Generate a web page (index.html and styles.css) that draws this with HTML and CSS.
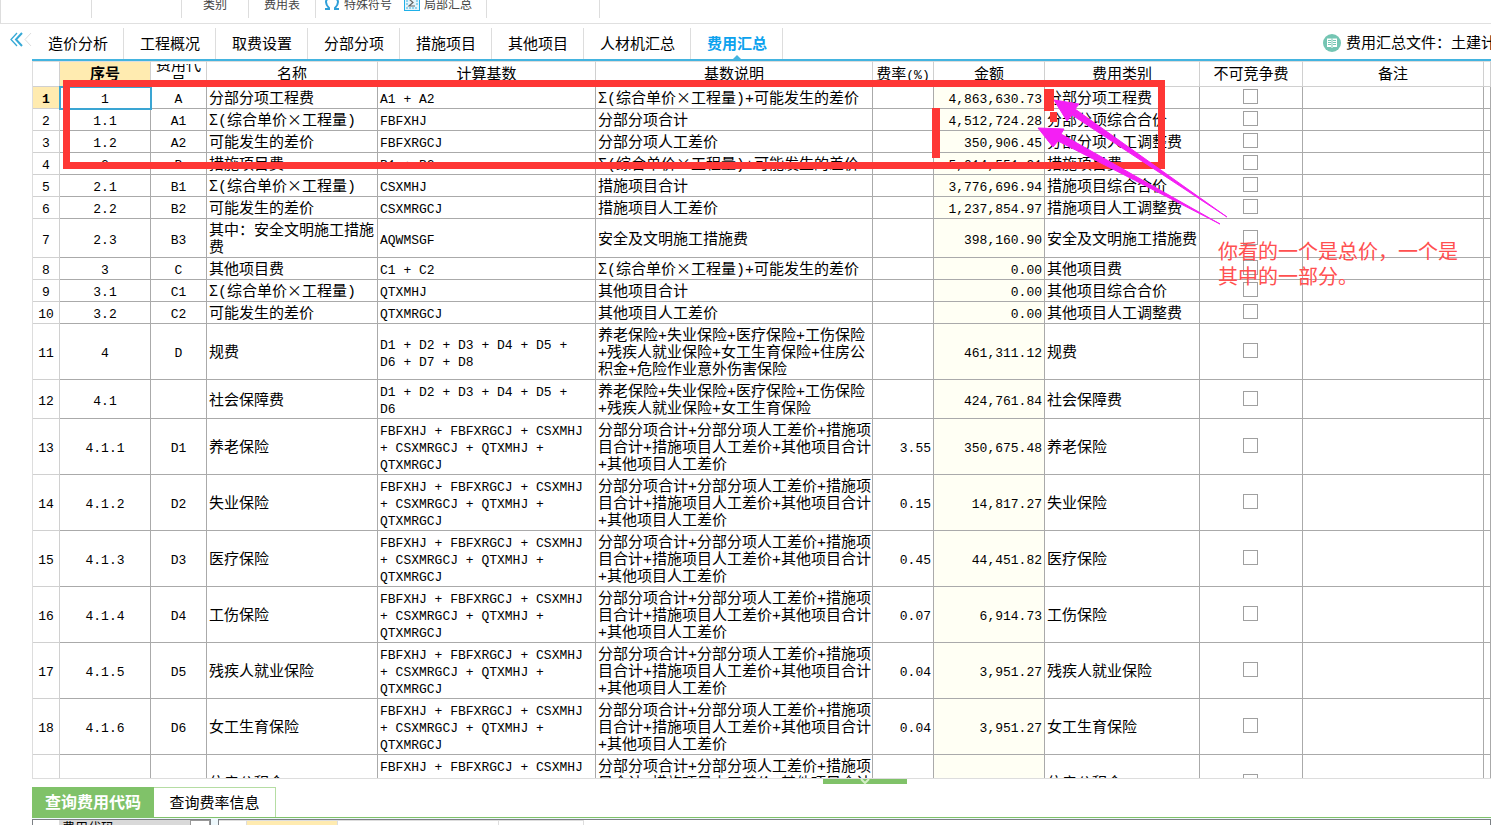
FILE: index.html
```html
<!DOCTYPE html>
<html lang="zh-CN">
<head>
<meta charset="utf-8">
<title>费用汇总</title>
<link rel="stylesheet" href="styles.css">
</head>
<body>
<div class="app">
  <header class="ribbon">
    <div class="group group-a"></div>
    <div class="group group-b"></div>
    <button class="group group-c">类别</button>
    <button class="group group-d">费用表</button>
    <div class="group group-e">
      <button class="tool"><svg width="16" height="14" viewBox="0 0 16 14"><path d="M1 9H5V8C3 6 2 4 2 2C2 0 4 -3 8 -3C12 -3 14 0 14 2C14 4 13 6 11 8V9H15" fill="none" stroke="#2f9fd8" stroke-width="2"/></svg>特殊符号</button>
      <button class="tool"><svg width="16" height="14" viewBox="0 0 16 14"><rect x=".5" y="-5" width="15" height="15.500" fill="#e4f4fb" stroke="#1fb0e8"/><path d="M2 1H4M12 1H14M2 4H4M12 4H14M2 8H14" stroke="#8fd3ee" stroke-width="2" stroke-dasharray="2 1"/><path d="M11 -1H5L9 2.500L5 6H11" fill="none" stroke="#666" stroke-width="1.200"/></svg>局部汇总</button>
    </div>
    <div class="group group-f"></div>
  </header>
  <div class="body">
    <aside class="rail">
      <button class="collapse" aria-label="收起"><svg width="22" height="16" viewBox="0 0 22 16"><path d="M7 1L1 7.500L7 14" fill="none" stroke="#36a9d6" stroke-width="1.300"/><path d="M12 1L6 7.500L12 14" fill="none" stroke="#36a9d6" stroke-width="2"/><path d="M21 1L15 7.500L21 14" fill="none" stroke="#ddd"/></svg></button>
    </aside>
    <main class="main">
      <nav class="tabs">
        <button class="tab">造价分析</button>
        <button class="tab">工程概况</button>
        <button class="tab">取费设置</button>
        <button class="tab">分部分项</button>
        <button class="tab">措施项目</button>
        <button class="tab">其他项目</button>
        <button class="tab">人材机汇总</button>
        <button class="tab active">费用汇总</button>
        <div class="file">
          <svg width="18" height="18" viewBox="0 0 18 18"><circle cx="9" cy="9" r="9" fill="#74c5b3"/><path d="M4 4.500H8.300L9 5L9.700 4.500H14V13H10L9 14L8 13H4Z" fill="#fff"/><path d="M5 6.500H8M5 8.500H8M5 10.500H8M10 6.500H13M10 8.500H13M10 10.500H13M9 5V13" stroke="#74c5b3"/></svg>
          <span>费用汇总文件：土建计价</span>
        </div>
      </nav>
      <section class="grid">
        <table class="sheet">
          <colgroup><col class="w-no"><col class="w-seq"><col class="w-code"><col class="w-name"><col class="w-base"><col class="w-desc"><col class="w-rate"><col class="w-sum"><col class="w-type"><col class="w-check"><col class="w-note"><col></colgroup>
          <thead>
            <tr><th></th><th class="hot">序号</th><th><div class="two">费用代<br>号</div></th><th>名称</th><th>计算基数</th><th>基数说明</th><th>费率<span class="m">(%)</span></th><th>金额</th><th>费用类别</th><th>不可竞争费</th><th>备注</th><th></th></tr>
          </thead>
          <tbody>
            <tr><th class="hot">1</th><td class="picked">1</td><td>A</td><td>分部分项工程费</td><td>A1 + A2</td><td><i>Σ</i>(综合单价<i>×</i>工程量)+可能发生的差价</td><td></td><td>4,863,630.73</td><td>分部分项工程费</td><td><input type="checkbox" aria-label="不可竞争费 1"></td><td></td><td></td></tr>
            <tr><th>2</th><td>1.1</td><td>A1</td><td><i>Σ</i>(综合单价<i>×</i>工程量)</td><td>FBFXHJ</td><td>分部分项合计</td><td></td><td>4,512,724.28</td><td>分部分项综合合价</td><td><input type="checkbox" aria-label="不可竞争费 2"></td><td></td><td></td></tr>
            <tr><th>3</th><td>1.2</td><td>A2</td><td>可能发生的差价</td><td>FBFXRGCJ</td><td>分部分项人工差价</td><td></td><td>350,906.45</td><td>分部分项人工调整费</td><td><input type="checkbox" aria-label="不可竞争费 3"></td><td></td><td></td></tr>
            <tr><th>4</th><td>2</td><td>B</td><td>措施项目费</td><td>B1 + B2</td><td><i>Σ</i>(综合单价<i>×</i>工程量)+可能发生的差价</td><td></td><td>5,014,551.91</td><td>措施项目费</td><td><input type="checkbox" aria-label="不可竞争费 4"></td><td></td><td></td></tr>
            <tr><th>5</th><td>2.1</td><td>B1</td><td><i>Σ</i>(综合单价<i>×</i>工程量)</td><td>CSXMHJ</td><td>措施项目合计</td><td></td><td>3,776,696.94</td><td>措施项目综合合价</td><td><input type="checkbox" aria-label="不可竞争费 5"></td><td></td><td></td></tr>
            <tr><th>6</th><td>2.2</td><td>B2</td><td>可能发生的差价</td><td>CSXMRGCJ</td><td>措施项目人工差价</td><td></td><td>1,237,854.97</td><td>措施项目人工调整费</td><td><input type="checkbox" aria-label="不可竞争费 6"></td><td></td><td></td></tr>
            <tr><th>7</th><td>2.3</td><td>B3</td><td>其中：安全文明施工措施<br>费</td><td>AQWMSGF</td><td>安全及文明施工措施费</td><td></td><td>398,160.90</td><td>安全及文明施工措施费</td><td><input type="checkbox" aria-label="不可竞争费 7"></td><td></td><td></td></tr>
            <tr><th>8</th><td>3</td><td>C</td><td>其他项目费</td><td>C1 + C2</td><td><i>Σ</i>(综合单价<i>×</i>工程量)+可能发生的差价</td><td></td><td>0.00</td><td>其他项目费</td><td><input type="checkbox" aria-label="不可竞争费 8"></td><td></td><td></td></tr>
            <tr><th>9</th><td>3.1</td><td>C1</td><td><i>Σ</i>(综合单价<i>×</i>工程量)</td><td>QTXMHJ</td><td>其他项目合计</td><td></td><td>0.00</td><td>其他项目综合合价</td><td><input type="checkbox" aria-label="不可竞争费 9"></td><td></td><td></td></tr>
            <tr><th>10</th><td>3.2</td><td>C2</td><td>可能发生的差价</td><td>QTXMRGCJ</td><td>其他项目人工差价</td><td></td><td>0.00</td><td>其他项目人工调整费</td><td><input type="checkbox" aria-label="不可竞争费 10"></td><td></td><td></td></tr>
            <tr><th>11</th><td>4</td><td>D</td><td>规费</td><td>D1 + D2 + D3 + D4 + D5 +<br>D6 + D7 + D8</td><td>养老保险+失业保险+医疗保险+工伤保险<br>+残疾人就业保险+女工生育保险+住房公<br>积金+危险作业意外伤害保险</td><td></td><td>461,311.12</td><td>规费</td><td><input type="checkbox" aria-label="不可竞争费 11"></td><td></td><td></td></tr>
            <tr><th>12</th><td>4.1</td><td></td><td>社会保障费</td><td>D1 + D2 + D3 + D4 + D5 +<br>D6</td><td>养老保险+失业保险+医疗保险+工伤保险<br>+残疾人就业保险+女工生育保险</td><td></td><td>424,761.84</td><td>社会保障费</td><td><input type="checkbox" aria-label="不可竞争费 12"></td><td></td><td></td></tr>
            <tr><th>13</th><td>4.1.1</td><td>D1</td><td>养老保险</td><td>FBFXHJ + FBFXRGCJ + CSXMHJ<br>+ CSXMRGCJ + QTXMHJ +<br>QTXMRGCJ</td><td>分部分项合计+分部分项人工差价+措施项<br>目合计+措施项目人工差价+其他项目合计<br>+其他项目人工差价</td><td>3.55</td><td>350,675.48</td><td>养老保险</td><td><input type="checkbox" aria-label="不可竞争费 13"></td><td></td><td></td></tr>
            <tr><th>14</th><td>4.1.2</td><td>D2</td><td>失业保险</td><td>FBFXHJ + FBFXRGCJ + CSXMHJ<br>+ CSXMRGCJ + QTXMHJ +<br>QTXMRGCJ</td><td>分部分项合计+分部分项人工差价+措施项<br>目合计+措施项目人工差价+其他项目合计<br>+其他项目人工差价</td><td>0.15</td><td>14,817.27</td><td>失业保险</td><td><input type="checkbox" aria-label="不可竞争费 14"></td><td></td><td></td></tr>
            <tr><th>15</th><td>4.1.3</td><td>D3</td><td>医疗保险</td><td>FBFXHJ + FBFXRGCJ + CSXMHJ<br>+ CSXMRGCJ + QTXMHJ +<br>QTXMRGCJ</td><td>分部分项合计+分部分项人工差价+措施项<br>目合计+措施项目人工差价+其他项目合计<br>+其他项目人工差价</td><td>0.45</td><td>44,451.82</td><td>医疗保险</td><td><input type="checkbox" aria-label="不可竞争费 15"></td><td></td><td></td></tr>
            <tr><th>16</th><td>4.1.4</td><td>D4</td><td>工伤保险</td><td>FBFXHJ + FBFXRGCJ + CSXMHJ<br>+ CSXMRGCJ + QTXMHJ +<br>QTXMRGCJ</td><td>分部分项合计+分部分项人工差价+措施项<br>目合计+措施项目人工差价+其他项目合计<br>+其他项目人工差价</td><td>0.07</td><td>6,914.73</td><td>工伤保险</td><td><input type="checkbox" aria-label="不可竞争费 16"></td><td></td><td></td></tr>
            <tr><th>17</th><td>4.1.5</td><td>D5</td><td>残疾人就业保险</td><td>FBFXHJ + FBFXRGCJ + CSXMHJ<br>+ CSXMRGCJ + QTXMHJ +<br>QTXMRGCJ</td><td>分部分项合计+分部分项人工差价+措施项<br>目合计+措施项目人工差价+其他项目合计<br>+其他项目人工差价</td><td>0.04</td><td>3,951.27</td><td>残疾人就业保险</td><td><input type="checkbox" aria-label="不可竞争费 17"></td><td></td><td></td></tr>
            <tr><th>18</th><td>4.1.6</td><td>D6</td><td>女工生育保险</td><td>FBFXHJ + FBFXRGCJ + CSXMHJ<br>+ CSXMRGCJ + QTXMHJ +<br>QTXMRGCJ</td><td>分部分项合计+分部分项人工差价+措施项<br>目合计+措施项目人工差价+其他项目合计<br>+其他项目人工差价</td><td>0.04</td><td>3,951.27</td><td>女工生育保险</td><td><input type="checkbox" aria-label="不可竞争费 18"></td><td></td><td></td></tr>
            <tr><th></th><td></td><td></td><td>住房公积金</td><td>FBFXHJ + FBFXRGCJ + CSXMHJ<br>+ CSXMRGCJ + QTXMHJ +<br>QTXMRGCJ</td><td>分部分项合计+分部分项人工差价+措施项<br>目合计+措施项目人工差价+其他项目合计<br>+其他项目人工差价</td><td></td><td></td><td>住房公积金</td><td><input type="checkbox" aria-label="不可竞争费 19"></td><td></td><td></td></tr>
          </tbody>
        </table>
      </section>
      <div class="splitter"><button class="handle" aria-label="收起下方面板"><svg width="10" height="6" viewBox="0 0 10 6"><path d="M1 0L5 4L9 0" fill="none" stroke="#d5efc9" stroke-width="2"/></svg></button></div>
      <nav class="lower-tabs">
        <button class="lower active">查询费用代码</button>
        <button class="lower">查询费率信息</button>
      </nav>
      <section class="panels">
        <div class="tree"><span class="tree-mark">⌄⌄</span><span class="tree-head">费用代码</span><span class="tree-end"></span></div>
        <div class="list"><span class="list-a"></span><span class="list-b"></span><span class="list-c"></span><span class="list-d"></span></div>
      </section>
    </main>
  </div>
  <svg class="marks" width="1240" height="240" viewBox="0 0 1240 240">
    <rect x="66.500" y="83.500" width="1095" height="82" fill="none" stroke="#fe3735" stroke-width="7"/>
    <path d="M932 108h8v50h-8zM1044 89h10v22h-10zM1050 112h7v10h-7z" fill="#fe3735"/>
    <path d="M1054 100L1079 104L1075 109L1227 217L1072 115L1067 121ZM1038 128L1064 129L1061 134L1220 224L1058 141L1053 147Z" fill="#f41ff4" stroke="#f41ff4"/>
  </svg>
  <p class="remark">你看的一个是总价，一个是<br>其中的一部分。</p>
</div>
</body>
</html>
```
FILE: styles.css
```css
* { box-sizing: border-box; }
body {
  margin: 0;
  overflow: hidden;
  background: #fff;
  color: #000;
  font: 15px/17px "Liberation Mono", "Noto Sans CJK SC", monospace;
}
button {
  margin: 0;
  padding: 0;
  border: 0;
  background: none;
  color: inherit;
  font: inherit;
  white-space: nowrap;
}
svg { display: block; flex: none; }
.app { position: relative; display: flex; flex-direction: column; height: 100vh; overflow: hidden; }

.ribbon { display: flex; flex: none; height: 24px; padding-bottom: 5px; border-bottom: 1px solid #e0e0e0; overflow: hidden; border-left: 1px solid #ddd; }
.group {
  display: flex;
  align-items: flex-start;
  justify-content: center;
  height: 18px;
  border-right: 1px solid #ddd;
  color: #444;
  font-size: 12px;
  line-height: 13px;
}
.group-a { width: 91px; }
.group-b { width: 90px; }
.group-c { width: 67px; }
.group-d { width: 67px; }
.group-e { width: 171px; padding-left: 8px; gap: 12px; justify-content: flex-start; }
.group-f { width: 113px; }
.tool { display: flex; gap: 4px; }

.body { display: flex; flex: 1; min-height: 0; }
.rail { flex: none; width: 32px; padding: 8px 0 0 10px; }
.main { display: flex; flex-direction: column; flex: 1; min-width: 0; }

.tabs { display: flex; flex: none; height: 37px; padding-top: 4px; border-bottom: 2px solid #43b4e0; overflow: hidden; }
.tab { position: relative; padding: 4px 15px 0 16px; border-right: 1px solid #ddd; }
.tab.active { color: #0ca2ee; font-weight: bold; }
.tab.active::after {
  content: "";
  position: absolute;
  left: 50%;
  bottom: 0;
  margin-left: -4px;
  border: 4px solid transparent;
  border-top: 0;
  border-bottom-color: #43b4e0;
}
.file { display: flex; align-items: center; gap: 5px; width: 168px; margin-left: auto; padding-bottom: 2px; overflow: hidden; white-space: nowrap; }
.file span { padding-top: 4px; }

.grid { flex: 1; min-height: 0; overflow: hidden; border-bottom: 1px solid #ddd; border-left: 1px solid #ddd; }
.sheet { width: 100%; table-layout: fixed; border-collapse: separate; border-spacing: 0; }
.w-no { width: 27px; }
.w-seq { width: 91px; }
.w-code { width: 56px; }
.w-name { width: 171px; }
.w-base { width: 218px; }
.w-desc { width: 277px; }
.w-rate { width: 61px; }
.w-sum { width: 111px; }
.w-type { width: 155px; }
.w-check { width: 103px; }
.w-note { width: 181px; }
.sheet th, .sheet td {
  padding: 4px 0 0 2px;
  border-right: 1px solid #aaa;
  border-bottom: 1px solid #aaa;
  font-weight: normal;
  text-align: left;
  vertical-align: middle;
  white-space: nowrap;
}
.sheet thead th { height: 26px; padding: 2px 0 0; border-color: #d0d0d0; border-top: 1px solid #ddd; text-align: center; }
.sheet tbody th { padding: 4px 0 0; border-color: #d0d0d0; text-align: center; }
.sheet th.hot { background: #ffebb0; font-weight: bold; }
.two { height: 22px; overflow: hidden; display: flex; align-items: center; justify-content: center; }
.sheet tbody th, .sheet td:nth-child(2), .sheet td:nth-child(3), .sheet td:nth-child(5),
.sheet td:nth-child(7), .sheet td:nth-child(8), .m { font-size: 13px; }
.sheet td i { font-family: "Noto Sans CJK SC", sans-serif; font-style: normal; line-height: 0; }
.sheet td:nth-child(2), .sheet td:nth-child(3), .sheet td:nth-child(10) { padding-left: 0; text-align: center; }
.sheet td:nth-child(7), .sheet td:nth-child(8) { padding-right: 2px; text-align: right; }
.sheet td:nth-child(8) { background: #fffff4; }
.sheet td:nth-child(10) { padding: 0 2px 2px 0; }
.sheet td.picked { outline: 2px solid #3aa5d3; outline-offset: -1px; }
.sheet input { display: block; appearance: none; width: 15px; height: 15px; margin: 0 auto; border: 1px solid #a0a0a0; background: #fff; }

.splitter { display: flex; flex: none; height: 8px; padding-left: 791px; }
.handle { display: flex; justify-content: center; width: 84px; height: 5px; background: #80c269; }
.lower-tabs { display: flex; flex: none; height: 31px; border-bottom: 1px solid #80c269; }
.lower { width: 122px; padding-top: 4px; border: 1px solid #b5dda3; border-width: 1px 1px 0 0; }
.lower.active { border: 0; background: #80c269; color: #fff; font-size: 16px; font-weight: bold; }
.panels { display: flex; flex: none; gap: 7px; height: 7px; padding-top: 1px; background: #eef8fc; overflow: hidden; }
.tree, .list { display: flex; height: 20px; border: 1px solid #7c8084; background: #fff; }
.tree { width: 179px; }
.list { flex: 1; }
.tree-mark { width: 26px; font-size: 10px; line-height: 10px; text-align: center; }
.tree-head { flex: 1; padding-left: 3px; background: #d9d9d9; font-size: 13px; line-height: 17px; }
.tree-end { width: 20px; border: 1px solid #999; }
.list span { border: 1px solid #ddd; border-left: 0; }
.list-a { width: 28px; }
.list .list-b { width: 91px; background: #ffebb0; }
.list-c { width: 161px; }
.list-d { width: 85px; }

.marks { position: absolute; left: 0; top: 0; pointer-events: none; }
.remark { position: absolute; left: 1218px; top: 241px; margin: 0; color: #ff5050; font-size: 20px; line-height: 25px; white-space: nowrap; }
```
